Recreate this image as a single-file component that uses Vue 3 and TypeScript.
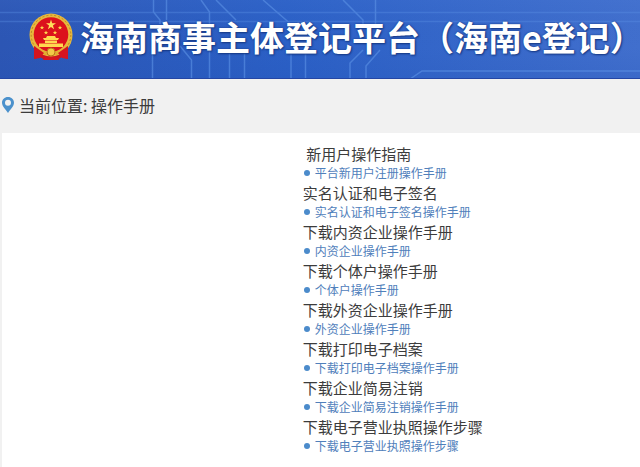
<script setup lang="ts">
interface Manual {
  title: string
  link: string
  indent?: boolean
}

const manuals: Manual[] = [
  { title: '新用户操作指南', link: '平台新用户注册操作手册', indent: true },
  { title: '实名认证和电子签名', link: '实名认证和电子签名操作手册' },
  { title: '下载内资企业操作手册', link: '内资企业操作手册' },
  { title: '下载个体户操作手册', link: '个体户操作手册' },
  { title: '下载外资企业操作手册', link: '外资企业操作手册' },
  { title: '下载打印电子档案', link: '下载打印电子档案操作手册' },
  { title: '下载企业简易注销', link: '下载企业简易注销操作手册' },
  { title: '下载电子营业执照操作步骤', link: '下载电子营业执照操作步骤' },
]
</script>

<template>
  <div class="page">
    <header class="banner">
      <svg class="circuit" viewBox="0 0 640 79" preserveAspectRatio="none" aria-hidden="true">
        <defs>
          <linearGradient id="sky" x1="0" y1="0" x2="1" y2="0">
            <stop offset="0" stop-color="#2c56b4" />
            <stop offset="0.45" stop-color="#2b60c6" />
            <stop offset="1" stop-color="#416fcd" />
          </linearGradient>
          <linearGradient id="shade" x1="0" y1="0" x2="0" y2="1">
            <stop offset="0" stop-color="#5d8be0" stop-opacity="0.1" />
            <stop offset="0.6" stop-color="#2450b0" stop-opacity="0" />
            <stop offset="1" stop-color="#1d4bb0" stop-opacity="0.15" />
          </linearGradient>
        </defs>
        <rect width="640" height="79" fill="url(#sky)" />
        <rect width="640" height="79" fill="url(#shade)" />
        <g fill="none" stroke="#5d93e6" stroke-width="1.5" opacity="0.6">
          <path d="M0 12.500H640M0 21.500H640" opacity="0.6" />
          <path d="M153.500 0V12L160 20V24M166.500 0V20M152.500 51V79M201 0L209.500 12V79M180 46L191.500 60V79" />
          <path d="M216 0L236 20M263 0L293 26M229.500 52V79M244.500 52V79M291 50V79M305.500 50V79M343 0L363 20V26M375.500 0V26" />
          <path d="M363 50L350 63V79M380 50L366 66V79M410 79L422 71H640M400 79H640" />
        </g>
        <path d="M0 78.500H640" stroke="#2446a4" />
      </svg>
      <div class="brand">
        <svg class="emblem" viewBox="0 0 46 50" role="img" aria-label="国徽">
          <path d="M6 32L6 47L12 45L17 48H29L34 45L40 47V32Z" fill="#cf1420" />
          <circle cx="23" cy="23" r="21.500" fill="#e7b83c" />
          <circle cx="23" cy="23" r="19.800" fill="none" stroke="#bd8423" stroke-width="1" stroke-dasharray="2 2" />
          <circle cx="23" cy="22.500" r="17.300" fill="#dc111c" />
          <path d="M23 7.500L24.200 11.200H28L24.900 13.500L26.100 17.200L23 14.900L19.900 17.200L21.100 13.500L18 11.200H21.800Z" fill="#ffdf5c" />
          <g fill="#ffd84f">
            <path id="small-star" d="M14 13.500L14.600 15H16.200L14.900 16L15.400 17.600L14 16.600L12.600 17.600L13.100 16L11.800 15H13.400Z" />
            <use href="#small-star" x="4" y="5" />
            <use href="#small-star" x="13" y="5" />
            <use href="#small-star" x="18" />
            <path d="M18 26L19 24H27L28 26H31L30 28H16L15 26ZM17 28.500H29V31H17ZM11 31.500H35V35H11Z" />
          </g>
          <path d="M9 36Q23 43 37 36L35 40L28 43H18L11 40Z" fill="#e4ad32" />
          <circle cx="23" cy="40" r="4" fill="#f2c948" stroke="#bb741c" stroke-width="1" />
          <path d="M6 34L16 41L12 46L6 47ZM40 34L30 41L34 46L40 47ZM17 45H29L31 48H15Z" fill="#d51420" />
        </svg>
        <h1 class="title">海南商事主体登记平台（海南e登记）</h1>
      </div>
    </header>

    <nav class="crumbs" aria-label="当前位置">
      <svg class="pin" viewBox="0 0 14 18" aria-hidden="true">
        <path fill="#4b91cc" fill-rule="evenodd" d="M7 1C3.500 1 1 3.500 1 6.800C1 10.500 5 13.500 7 17C9 13.500 13 10.500 13 6.800C13 3.500 10.500 1 7 1ZM7 3.800A3 3 0 1 1 7 9.800A3 3 0 1 1 7 3.800Z" />
      </svg>
      <span>当前位置: 操作手册</span>
    </nav>

    <main class="panel">
      <section v-for="item in manuals" :key="item.title" class="manual">
        <h2 class="heading"><template v-if="item.indent">&nbsp;</template>{{ item.title }}</h2>
        <a class="link" href="#"><i class="dot"></i>{{ item.link }}</a>
      </section>
    </main>
  </div>
</template>

<style>
body {
  margin: 0;
  background: #f1f1f1;
}
</style>

<style scoped>
.page {
  display: flex;
  flex-direction: column;
  min-height: 100vh;
  font-family: "Noto Sans CJK SC", sans-serif;
  color: #3c3c3c;
}

.banner {
  position: relative;
  background: #2f62c4;
  overflow: hidden;
}

.circuit {
  position: absolute;
  inset: 0;
  width: 100%;
  height: 100%;
}

.brand {
  position: relative;
  display: flex;
  align-items: center;
  gap: 6px;
  padding: 12px 0 17px 28px;
}

.emblem {
  flex: none;
  width: 46px;
  height: 50px;
}

.title {
  margin: 0;
  font-size: 34px;
  line-height: 50px;
  font-weight: 700;
  white-space: nowrap;
  color: #fff;
  text-shadow: 0 0 2px #173a86, 1px 1px 2px #173a86;
}

.crumbs {
  display: flex;
  align-items: center;
  gap: 4px;
  padding: 14px 1px 16px;
  font-size: 16px;
  line-height: 24px;
}

.pin {
  flex: none;
  width: 14px;
  height: 18px;
}

.panel {
  flex: 1;
  margin-left: 2px;
  padding: 11px 0 8px 47%;
  background: #fff;
}

.manual {
  display: flex;
  flex-direction: column;
  align-items: flex-start;
}

.heading {
  margin: 0;
  font-size: 15px;
  line-height: 19px;
  font-weight: 400;
  white-space: nowrap;
}

.link {
  display: flex;
  align-items: center;
  gap: 5px;
  padding-left: 1px;
  font-size: 12px;
  line-height: 20px;
  white-space: nowrap;
  color: #5080bb;
  text-decoration: none;
}

.link:hover {
  text-decoration: underline;
}

.dot {
  width: 6px;
  height: 6px;
  border-radius: 50%;
  background: #4b8bcb;
}
</style>
